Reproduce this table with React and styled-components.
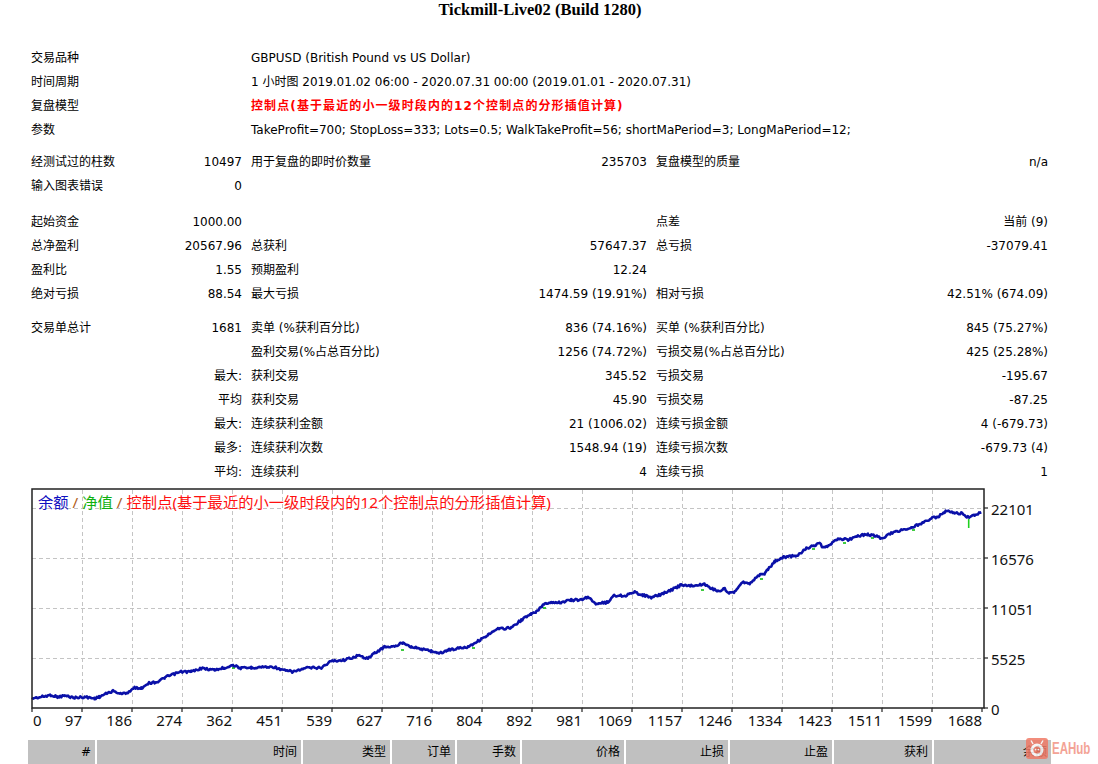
import React from "react";
import styled, { createGlobalStyle } from "styled-components";

const Global = createGlobalStyle`
  html, body { margin: 0; padding: 0; background: #fff; }
  body {
    font-family: "DejaVu Sans", "Noto Sans CJK SC", sans-serif;
    font-size: 12px;
    color: #000;
  }
`;

const Page = styled.div`
  position: relative;
  width: 1098px;
  height: 764px;
  overflow: hidden;
  background: #fff;
`;

const Title = styled.h1`
  margin: 0;
  height: 20px;
  padding-right: 18px;
  font-family: "Liberation Serif", "Noto Sans CJK SC", serif;
  font-weight: bold;
  font-size: 16.5px;
  line-height: 20px;
  text-align: center;
`;

const Stats = styled.div`
  display: grid;
  grid-template-columns: 109px 93px 249px 138px 244px 139px;
  column-gap: 9px;
  padding-left: 31px;
  margin-top: 26px;
`;

const Cell = styled.div`
  height: 24px;
  line-height: 24px;
  white-space: nowrap;
  text-align: ${(p) => (p.$align === "right" ? "right" : "left")};
  grid-column: ${(p) => p.$span || "auto"};
  color: ${(p) => (p.$red ? "#ff0000" : "#000")};
  font-weight: ${(p) => (p.$red ? "bold" : "normal")};
  letter-spacing: ${(p) => (p.$red ? "1.1px" : "normal")};
`;

const Spacer = styled.div`
  grid-column: 1 / -1;
  height: ${(p) => p.$h}px;
`;

const ChartBox = styled.div`
  margin-top: 3px;
  padding-left: 31px;
  height: 250px;
  svg { display: block; }
`;

const Header = styled.div`
  display: grid;
  grid-template-columns: 67px 204px 87px 63px 63px 102px 102px 102px 98px 117px;
  column-gap: 2px;
  margin-top: 3px;
  margin-left: 28px;
  width: 1023px;
`;

const HeadCell = styled.div`
  background: #c0c0c0;
  height: 24px;
  line-height: 25px;
  padding-right: 4px;
  text-align: right;
  white-space: nowrap;
`;

const Watermark = styled.div`
  position: absolute;
  left: 1026px;
  top: 738px;
  display: flex;
  align-items: center;
  gap: 4px;
  opacity: 0.85;
`;

const WaterText = styled.span`
  display: inline-block;
  font-family: "Liberation Sans", sans-serif;
  font-weight: bold;
  font-size: 16px;
  color: #f29484;
  transform: scaleX(0.72);
  transform-origin: left center;
`;

/* ---------- data ---------- */

const rows = [
  ["交易品种", "", { t: "GBPUSD (British Pound vs US Dollar)", wide: true }],
  ["时间周期", "", { t: "1 小时图 2019.01.02 06:00 - 2020.07.31 00:00 (2019.01.01 - 2020.07.31)", wide: true }],
  ["复盘模型", "", { t: "控制点(基于最近的小一级时段内的12个控制点的分形插值计算)", wide: true, red: true }],
  ["参数", "", { t: "TakeProfit=700; StopLoss=333; Lots=0.5; WalkTakeProfit=56; shortMaPeriod=3; LongMaPeriod=12;", wide: true }],
  { spacer: 8 },
  ["经测试过的柱数", "10497", "用于复盘的即时价数量", "235703", "复盘模型的质量", "n/a"],
  ["输入图表错误", "0", "", "", "", ""],
  { spacer: 12 },
  ["起始资金", "1000.00", "", "", "点差", "当前 (9)"],
  ["总净盈利", "20567.96", "总获利", "57647.37", "总亏损", "-37079.41"],
  ["盈利比", "1.55", "预期盈利", "12.24", "", ""],
  ["绝对亏损", "88.54", "最大亏损", "1474.59 (19.91%)", "相对亏损", "42.51% (674.09)"],
  { spacer: 10 },
  ["交易单总计", "1681", "卖单 (%获利百分比)", "836 (74.16%)", "买单 (%获利百分比)", "845 (75.27%)"],
  ["", "", "盈利交易(%占总百分比)", "1256 (74.72%)", "亏损交易(%占总百分比)", "425 (25.28%)"],
  ["", "最大:", "获利交易", "345.52", "亏损交易", "-195.67"],
  ["", "平均", "获利交易", "45.90", "亏损交易", "-87.25"],
  ["", "最大:", "连续获利金额", "21 (1006.02)", "连续亏损金额", "4 (-679.73)"],
  ["", "最多:", "连续获利次数", "1548.94 (19)", "连续亏损次数", "-679.73 (4)"],
  ["", "平均:", "连续获利", "4", "连续亏损", "1"],
];

const headers = ["#", "时间", "类型", "订单", "手数", "价格", "止损", "止盈", "获利", "余额"];

/* ---------- chart ---------- */

const OX = 31;
const OY = 487;
const ctrl = [
  [32, 698.3], [41.3, 697], [51, 695], [58, 697], [64.7, 695.7], [74.7, 697.7], [84.7, 697],
  [94.7, 698.3], [99.7, 696.7], [104.7, 694.3], [113, 691], [121.3, 694], [128, 692.3],
  [134.7, 687.7], [141.3, 688.3], [148, 683.3], [158, 681.7], [164.7, 677.7], [171.3, 675],
  [181.3, 671.7], [191.3, 671.7], [201.3, 668.3], [214.7, 670], [224.7, 667.7], [233, 665],
  [241.3, 668.3], [251.3, 667.7], [261.3, 667], [274.7, 667], [281.3, 670], [293, 671.7],
  [308, 667.7], [321.3, 667.7], [331.3, 661], [344.7, 660], [358, 655.7], [368, 658.3],
  [374.7, 653.3], [384.7, 646.7], [394.7, 646.7], [403, 642.3], [411.3, 646.7], [421.3, 649],
  [431.3, 651], [439.7, 653.3], [448, 650], [458, 648.3], [468, 646.7], [478, 641], [488, 635],
  [498, 629], [511.3, 627.7], [521.3, 620], [531.3, 614], [536.3, 612], [544.7, 603.3],
  [551.3, 602.3], [561.3, 602.3], [571.3, 600], [581.3, 600], [588, 596.7], [594.7, 603.3],
  [608, 602.3], [613, 595.7], [624.7, 595.7], [634.7, 592.3], [643, 595], [651.3, 597.7],
  [661.3, 594.3], [671.3, 590], [681.3, 585], [691.3, 585.7], [704.7, 584.3], [711.3, 588.3],
  [718, 591], [724.7, 589], [729.7, 593.3], [734.7, 591.7], [741.3, 582.3], [749.7, 583.3],
  [758, 575.7], [764.7, 573.3], [774.7, 561.7], [781.3, 557.7], [788, 556.7], [798, 555],
  [806.3, 548.3], [814.7, 545.7], [819.7, 543.3], [823, 548.3], [831.3, 544.3], [838, 538.3],
  [848, 540], [858, 535.7], [868, 534.3], [878, 536.7], [881.3, 538.3], [891.3, 533.3],
  [901.3, 530], [911.3, 527.7], [921.3, 523.3], [931.3, 518.3], [938, 516.7], [946.3, 511],
  [954.7, 513.3], [961.3, 513.3], [968, 517.3], [974.7, 515.7], [981.3, 512.3],
];

function rnd(i) {
  const s = Math.sin(i * 12.9898 + 78.233) * 43758.5453;
  return s - Math.floor(s);
}

function buildPath() {
  let d = "";
  let k = 0;
  for (let s = 0; s < ctrl.length - 1; s++) {
    const [x0, y0] = ctrl[s];
    const [x1, y1] = ctrl[s + 1];
    for (let x = x0; x < x1; x += 1.1) {
      const t = (x - x0) / (x1 - x0);
      const y = y0 + (y1 - y0) * t + (rnd(k++) - 0.5) * 2.2;
      d += (d ? "L" : "M") + (x - OX).toFixed(1) + " " + (y - OY).toFixed(1);
    }
  }
  const last = ctrl[ctrl.length - 1];
  d += "L" + (last[0] - OX).toFixed(1) + " " + (last[1] - OY).toFixed(1);
  return d;
}

const curve = buildPath();
const xLabels = [0, 97, 186, 274, 362, 451, 539, 627, 716, 804, 892, 981, 1069, 1157, 1246, 1334, 1423, 1511, 1599, 1688];
const yLabels = [["22101", 21], ["16576", 71], ["11051", 121], ["5525", 171], ["0", 221]];
const greens = [
  [232, 666], [401, 648], [472, 646], [543, 606], [701, 588], [760, 577], [812, 547],
  [843, 541], [871, 536], [912, 528],
];

const axisFont = { fontFamily: "Noto Sans, Liberation Sans, sans-serif", fontSize: "15px" };
const legendFont = { fontFamily: "Noto Sans, Noto Sans CJK SC, sans-serif", fontSize: "15.3px" };

function Chart() {
  return (
    <svg width="1067" height="250" viewBox="0 0 1067 250">
      {/* grid */}
      {[21, 71, 121, 171].map((y) => (
        <line key={"h" + y} x1="1" x2="953" y1={y + 0.5} y2={y + 0.5} stroke="#c4c4c4" strokeWidth="1" strokeDasharray="4 3" />
      ))}
      {Array.from({ length: 18 }, (_, k) => 51 + 50 * k).map((x) => (
        <line key={"v" + x} x1={x + 0.5} x2={x + 0.5} y1="3" y2="221" stroke="#c4c4c4" strokeWidth="1" strokeDasharray="4 3" />
      ))}
      {/* curve */}
      {greens.map(([x, y], i) => (
        <line key={"g" + i} x1={x - OX} x2={x - OX + 3} y1={y - OY + 2} y2={y - OY + 2} stroke="#10c010" strokeWidth="1.6" />
      ))}
      <path d={curve} fill="none" stroke="#0a10a8" strokeWidth="2.6" strokeLinejoin="round" />
      <line x1={968.7 - OX} x2={968.7 - OX} y1={519 - OY} y2={528 - OY} stroke="#20d020" strokeWidth="1.6" />
      {/* frame */}
      <rect x="1" y="2" width="952" height="219" fill="none" stroke="#222" strokeWidth="1.5" />
      {Array.from({ length: 20 }, (_, k) => 1 + 50 * k).map((x) => (
        <line key={"t" + x} x1={x} x2={x} y1="221" y2="225" stroke="#222" strokeWidth="1.2" />
      ))}
      {yLabels.map(([, y]) => (
        <line key={"yt" + y} x1="953" x2="957" y1={y} y2={y} stroke="#222" strokeWidth="1.2" />
      ))}
      {/* labels */}
      {xLabels.map((v, k) => (
        <text key={"xl" + v} x={k === 0 ? 2 : 1 + 50 * k} y="239" textAnchor={k === 0 ? "start" : "end"} style={axisFont} fill="#111">
          {v}
        </text>
      ))}
      {yLabels.map(([v, y]) => (
        <text key={"yl" + v} x="960" y={y + 7} style={axisFont} fill="#111">
          {v}
        </text>
      ))}
      <text x="7" y="21" style={legendFont}>
        <tspan fill="#1010c0">余额</tspan>
        <tspan fill="#b0601a"> / </tspan>
        <tspan fill="#10b010">净值</tspan>
        <tspan fill="#b0601a"> / </tspan>
        <tspan fill="#ff1010">控制点(基于最近的小一级时段内的12个控制点的分形插值计算)</tspan>
      </text>
    </svg>
  );
}

function Logo() {
  return (
    <svg width="22" height="21" viewBox="0 0 22 21">
      <rect x="0" y="0" width="22" height="21" rx="3" fill="#f07a66" />
      <circle cx="11" cy="12" r="6.5" fill="#fff" />
      <circle cx="11" cy="12" r="3.6" fill="#f07a66" />
      <line x1="7" y1="6" x2="5" y2="2.5" stroke="#fff" strokeWidth="1.4" />
      <line x1="15" y1="6" x2="17" y2="2.5" stroke="#fff" strokeWidth="1.4" />
      <circle cx="9.6" cy="11.6" r="0.9" fill="#fff" />
      <circle cx="12.4" cy="11.6" r="0.9" fill="#fff" />
    </svg>
  );
}

export default function App() {
  return (
    <Page>
      <Global />
      <Title>Tickmill-Live02 (Build 1280)</Title>
      <Stats>
        {rows.map((r, i) => {
          if (!Array.isArray(r)) return <Spacer key={i} $h={r.spacer} />;
          if (typeof r[2] === "object") {
            return (
              <React.Fragment key={i}>
                <Cell>{r[0]}</Cell>
                <Cell />
                <Cell $span="3 / span 4" $red={r[2].red}>
                  {r[2].t}
                </Cell>
              </React.Fragment>
            );
          }
          return (
            <React.Fragment key={i}>
              <Cell>{r[0]}</Cell>
              <Cell $align="right">{r[1]}</Cell>
              <Cell>{r[2]}</Cell>
              <Cell $align="right">{r[3]}</Cell>
              <Cell>{r[4]}</Cell>
              <Cell $align="right">{r[5]}</Cell>
            </React.Fragment>
          );
        })}
      </Stats>
      <ChartBox>
        <Chart />
      </ChartBox>
      <Header>
        {headers.map((h) => (
          <HeadCell key={h}>{h}</HeadCell>
        ))}
      </Header>
      <Watermark>
        <Logo />
        <WaterText>EAHub</WaterText>
      </Watermark>
    </Page>
  );
}
